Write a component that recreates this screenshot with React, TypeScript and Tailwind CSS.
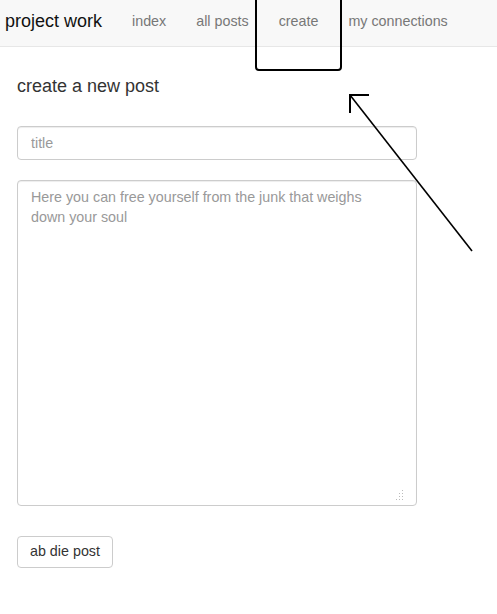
const navLinks = ["index", "all posts", "create", "my connections"];

const App = () => {
  return (
    <div
      className="relative min-h-[614px] bg-white text-[#333] overflow-hidden"
      style={{ fontFamily: '"Liberation Sans", Arial, sans-serif' }}
    >
      <nav className="flex items-start h-[47px] bg-[#f8f8f8] border-b border-[#e7e7e7]">
        <a className="pl-[5px] pr-[15px] pt-[11px] text-[18px] leading-5 text-[#111]">
          project work
        </a>
        {navLinks.map((link) => (
          <a
            key={link}
            className="px-[15px] pt-[11px] text-[14.3px] leading-5 text-[#777]"
          >
            {link}
          </a>
        ))}
      </nav>

      <main className="px-[17px] pt-[29px]">
        <h4 className="text-[18px] leading-5 text-[#333]">create a new post</h4>

        <input
          type="text"
          placeholder="title"
          className="block mt-[30px] w-[400px] h-[34px] px-[13px] text-[14.3px] border border-[#ccc] rounded-[4px] shadow-[inset_0_1px_1px_rgba(0,0,0,0.075)] placeholder:text-[#999] outline-none"
        />

        <div className="relative mt-[20px] w-[400px]">
          <textarea
            placeholder="Here you can free yourself from the junk that weighs down your soul"
            className="block w-[400px] h-[326px] pl-[13px] pr-[20px] py-[6px] text-[14.3px] leading-5 border border-[#ccc] rounded-[4px] shadow-[inset_0_1px_1px_rgba(0,0,0,0.075)] placeholder:text-[#999] outline-none resize-none"
          />
          <svg
            className="absolute right-[13px] bottom-[6px]"
            width="8"
            height="10"
            viewBox="0 0 8 10"
          >
            <g fill="#bbb">
              <rect x="6" y="0" width="1" height="1" />
              <rect x="6" y="3" width="1" height="1" />
              <rect x="3" y="3" width="1" height="1" />
              <rect x="6" y="6" width="1" height="1" />
              <rect x="3" y="6" width="1" height="1" />
              <rect x="0" y="9" width="1" height="1" />
              <rect x="3" y="9" width="1" height="1" />
              <rect x="6" y="9" width="1" height="1" />
            </g>
          </svg>
        </div>

        <button
          type="button"
          className="block mt-[30px] h-[32px] px-[12px] text-[14.3px] text-[#333] bg-white border border-[#ccc] rounded-[4px]"
        >
          ab die post
        </button>
      </main>

      {/* hand-drawn annotation */}
      <svg
        className="absolute inset-0 pointer-events-none"
        width="497"
        height="614"
        viewBox="0 0 497 614"
      >
        <rect
          x="256"
          y="-4"
          width="85"
          height="74"
          rx="3"
          fill="none"
          stroke="#000"
          strokeWidth="2"
        />
        <line x1="472" y1="251" x2="350" y2="95" stroke="#000" strokeWidth="1.6" />
        <polyline
          points="369,95 350,95 350,113"
          fill="none"
          stroke="#000"
          strokeWidth="2"
        />
      </svg>
    </div>
  );
};

export default App;
